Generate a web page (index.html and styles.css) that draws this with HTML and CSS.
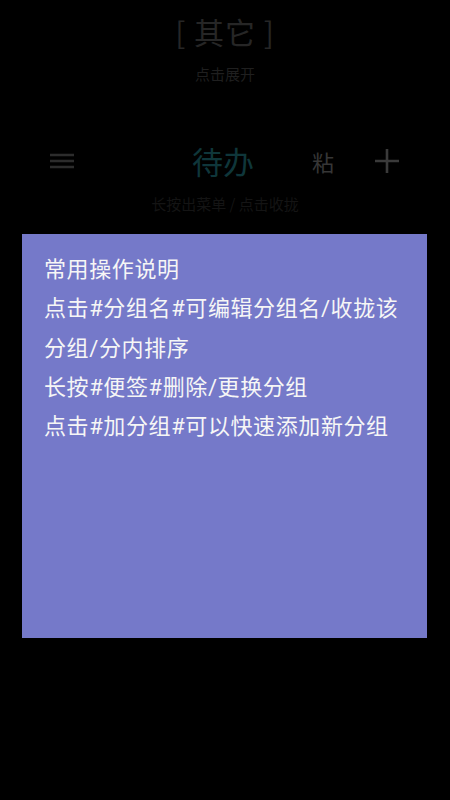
FILE: index.html
```html
<!DOCTYPE html>
<html lang="zh">
<head>
<meta charset="utf-8">
<link rel="stylesheet" href="styles.css">
</head>
<body>
<div class="screen">
  <header class="group-head">
    <div class="group-title">[ 其它 ]</div>
    <div class="group-sub">点击展开</div>
  </header>
  <nav class="toolbar">
    <svg class="menu-icon" width="24" height="16" viewBox="0 0 24 16"><path d="M0 2h24M0 8h24M0 14h24" stroke="#2c2c2c" stroke-width="2.4" fill="none"/></svg>
    <div class="title">待办</div>
    <div class="paste">粘</div>
    <svg class="plus-icon" width="24" height="24" viewBox="0 0 24 24"><path d="M12 0v24M0 12h24" stroke="#3a3a3a" stroke-width="2.6" fill="none"/></svg>
  </nav>
  <div class="hint">长按出菜单 / 点击收拢</div>
  <section class="note">
    <p>常用操作说明</p>
    <p>点击#分组名#可编辑分组名/收拢该分组/分内排序</p>
    <p>长按#便签#删除/更换分组</p>
    <p>点击#加分组#可以快速添加新分组</p>
  </section>
</div>
</body>
</html>
```
FILE: styles.css
```css
html, body {
  margin: 0;
  padding: 0;
  background: #000;
}
body {
  width: 450px;
  height: 800px;
  overflow: hidden;
  font-family: "Noto Sans CJK SC", "Noto Sans", sans-serif;
}
.screen {
  display: flex;
  flex-direction: column;
}
.group-head {
  display: flex;
  flex-direction: column;
  align-items: center;
  padding-top: 10px;
}
.group-title {
  font-size: 30px;
  line-height: 42px;
  color: #262626;
  letter-spacing: 1px;
}
.group-sub {
  font-size: 15px;
  line-height: 20px;
  margin-top: 12px;
  color: #1f1f1f;
}
.toolbar {
  display: flex;
  align-items: center;
  height: 44px;
  margin-top: 55px;
  padding: 0 50px;
}
.menu-icon {
  flex: none;
}
.title {
  font-size: 31px;
  line-height: 44px;
  color: #0f363a;
  margin-left: 118px;
}
.paste {
  font-size: 22px;
  color: #363636;
  margin-left: 58px;
}
.plus-icon {
  margin-left: 41px;
}
.hint {
  text-align: center;
  font-size: 15px;
  line-height: 20px;
  margin-top: 11px;
  color: #141414;
}
.note {
  margin: 20px 23px 0 22px;
  height: 404px;
  background: #7579c9;
  padding: 16px 14px 17px 22px;
  box-sizing: border-box;
  color: #f6f6f6;
  font-family: Roboto, "Noto Sans CJK SC", sans-serif;
  font-size: 22px;
  line-height: 39.3px;
  letter-spacing: 0.6px;
}
.note p {
  margin: 0;
}
```
